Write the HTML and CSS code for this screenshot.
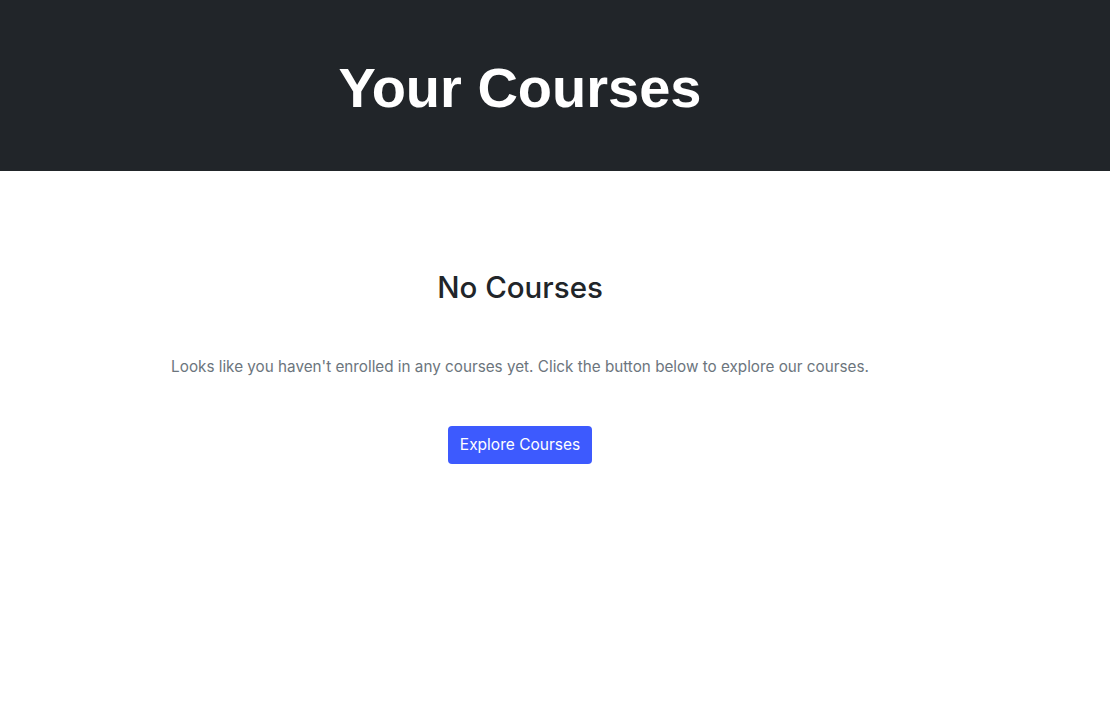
FILE: index.html
```html
<!DOCTYPE html>
<html lang="en">
<head>
<meta charset="utf-8">
<title>Your Courses</title>
<link rel="stylesheet" href="styles.css">
</head>
<body>
<header class="hero">
  <div class="wrap">
    <h1 class="hero-title">Your Courses</h1>
  </div>
</header>
<main class="wrap empty">
  <h2 class="empty-title">No Courses</h2>
  <p class="empty-text">Looks like you haven't enrolled in any courses yet. Click the button below to explore our courses.</p>
  <a class="btn" href="#">Explore Courses</a>
</main>
</body>
</html>
```
FILE: styles.css
```css
* { box-sizing: border-box; }
html, body { margin: 0; padding: 0; background: #fff; }
body {
  font-family: Inter, "Noto Sans", "Liberation Sans", sans-serif;
  color: #212529;
}
.wrap {
  width: 1040px;
  display: flex;
  flex-direction: column;
  align-items: center;
  text-align: center;
}
.hero {
  background: #212529;
  height: 171px;
  display: flex;
  align-items: center;
  padding-top: 4px;
}
.hero-title {
  margin: 0;
  font-family: "Liberation Sans", Arial, sans-serif;
  font-weight: 700;
  font-size: 56px;
  line-height: 1;
  color: #fff;
}
.empty {
  padding-top: 98px;
}
.empty-title {
  margin: 0;
  font-size: 29.5px;
  font-weight: 500;
  line-height: 36px;
  color: #212529;
}
.empty-text {
  margin: 50px 0 0;
  font-size: 15.25px;
  line-height: 24px;
  color: #6c757d;
}
.btn {
  margin-top: 47px;
  display: inline-block;
  background: #3d5afe;
  color: #fff;
  text-decoration: none;
  font-size: 15.5px;
  line-height: 24px;
  padding: 7px 12px;
  border-radius: 4px;
}
```
